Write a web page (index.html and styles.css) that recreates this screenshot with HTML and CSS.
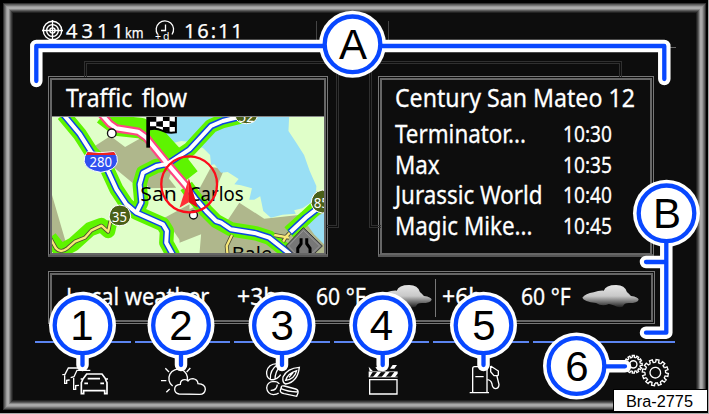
FILE: index.html
```html
<!DOCTYPE html>
<html lang="en">
<head>
    <meta charset="UTF-8">
    <meta name="viewport" content="width=device-width, initial-scale=1.0">
    <title>Infotainment display</title>
    <link rel="stylesheet" href="styles.css">
</head>
<body>

<div class="device">
    <div class="screen">
        <header class="status">
            <svg class="target-icon" viewBox="0 0 20 20">
                <circle cx="10" cy="10" r="8.8"/><circle cx="10" cy="10" r="5.6"/><circle cx="10" cy="10" r="2.5"/>
                <path d="M10 0V20M0 10H20"/>
            </svg>
            <span class="distance">4311</span>
            <span class="unit">km</span>
            <svg class="clock-icon" viewBox="0 0 20 22">
                <path d="M2.6 14.3A8.7 8.7 0 1 1 17 14.5M10.5 4.5V10.5H6"/>
                <text x="0" y="19.5" textLength="14.5">+d</text>
            </svg>
            <span class="time">16:11</span>
            <span class="status-slot"></span>
        </header>

        <main class="panels">
            <section class="panel">
                <h2 class="panel-title"><span class="traffic-title">Traffic flow</span></h2>
                <svg class="map" viewBox="36 138 819 411" preserveAspectRatio="none">
                    <rect x="36" y="138" width="819" height="411" fill="#e0ffc9"/>
                    <!-- built-up areas -->
                    <g fill="#afb78c">
                        <path d="M165 225L212 195L256 228L305 200L400 290L380 345L290 345L205 275Z"/>
                        <path d="M36 372L78 515L58 535L36 505Z"/>
                        <path d="M375 440L450 400V500L424 512Z"/>
                        <path d="M515 288L555 293L510 400L465 380Z"/>
                        <path d="M420 430L480 400L560 455L600 395L675 443L800 430L855 420V549H480L485 490L420 515Z"/>
                        <path d="M300 320L370 300L410 350L330 352Z"/>
                    </g>
                    <!-- water -->
                    <path fill="#99dff5" d="M385 138H750L748 180L770 213L795 252L812 300L832 345L830 385L790 412L765 418L770 428L730 431L695 440L672 420L663 376L645 386H630L638 352L605 343L585 340L598 324L565 303L545 305L525 280L515 282L512 252L490 230L470 228L450 212L425 210L385 220L345 170Z"/>
                    <path fill="#99dff5" d="M855 425V520L825 490L800 455Z"/>
                    <!-- traffic flow -->
                    <g class="flow">
                        <path d="M70 130L120 190L155 245L200 290L230 355L260 400L290 425L370 460L382 480L380 515L402 555"/>
                        <path d="M290 425L305 395L300 340L310 305L350 285L385 278L450 235L515 165L550 150L610 135"/>
                        <path class="flow-wide" d="M190 130L235 164L305 172L345 195L400 255L450 320"/>
                        <path d="M440 345L470 385L500 420L530 450L575 475L650 487L690 500L760 555"/>
                        <path d="M750 485L800 440L858 385"/>
                        <path d="M30 500L62 540L100 520L150 475L185 462L205 480L212 450"/>
                    </g>
                    <g class="minor-case">
                        <path d="M30 500L48 532Q62 548 82 532L105 512L135 500L155 478L185 464L205 482L212 450"/>
                        <path d="M565 555L562 525L578 492M705 492L750 500M732 512L740 498L752 485"/>
                    </g>
                    <g class="minor">
                        <path d="M30 500L48 532Q62 548 82 532L105 512L135 500L155 478L185 464L205 482L212 450"/>
                        <path d="M565 555L562 525L578 492M705 492L750 500M732 512L740 498L752 485"/>
                    </g>
                    <g class="highway-case">
                        <path d="M70 130L120 190L155 245L200 290L230 355L260 400L290 425L370 460L382 480L380 515L402 555"/>
                        <path d="M290 425L305 395L300 340L310 305L350 285L385 278L450 235L515 165L550 150L610 135"/>
                        <path d="M440 345L470 385L500 420L530 450L545 455L575 475L650 487L690 500L760 555"/>
                        <path d="M752 485L800 440L858 395"/>
                        <path class="jam" d="M185 130L210 158L230 172L295 182L320 200L385 280L445 350"/>
                    </g>
                    <g class="highway">
                        <path d="M70 130L120 190L155 245L200 290L230 355L260 400L290 425L370 460L382 480L380 515L402 555"/>
                        <path d="M290 425L305 395L300 340L310 305L350 285L385 278L450 235L515 165L550 150L610 135"/>
                        <path d="M440 345L470 385L500 420L530 450L545 455L575 475L650 487L690 500L760 555"/>
                        <path d="M754 483L800 440L858 395"/>
                        <path d="M185 130L210 158L230 172L295 182L320 200L385 280L445 350"/>
                    </g>
                    <g fill="#fff" stroke="#111" stroke-width="4">
                        <circle cx="216" cy="187" r="13"/>
                        <circle cx="462" cy="432" r="12"/>
                    </g>
                    <!-- destination flag -->
                    <path fill="#fff" d="M330 138H408V184L375 182L355 172L330 176Z"/>
                    <path d="M330 138H350V152H330ZM370 138H390V150H370ZM350 152L370 150V168L350 166ZM390 150L408 152V168L390 168ZM330 166L350 166V174L330 176ZM370 168L390 168V184L370 180Z"/>
                    <path fill="none" stroke="#000" stroke-width="6" d="M409 138V184Q385 188 368 179Q350 170 330 175"/>
                    <path d="M320 138H331V230H320Z"/>
                    <!-- place names -->
                    <text class="place" x="302" y="390" textLength="110" lengthAdjust="spacingAndGlyphs">San</text>
                    <text class="place" x="448" y="390" textLength="165" lengthAdjust="spacingAndGlyphs">Carlos</text>
                    <text class="place" x="577" y="570" textLength="122" lengthAdjust="spacingAndGlyphs">Bale</text>
                    <!-- road shields -->
                    <path fill="#2f50f0" stroke="#fff" stroke-width="3" d="M143 242Q183 248 223 242Q235 256 233 272Q228 298 183 304Q138 298 133 272Q131 256 143 242Z"/>
                    <path fill="#ef2020" d="M143 243Q183 249 223 243L228 252H138Z"/>
                    <text class="shield" x="149" y="288" textLength="68" lengthAdjust="spacingAndGlyphs">280</text>
                    <g fill="#4a5f18" stroke="#fff" stroke-width="3">
                        <path d="M240 402Q272 404 273 438Q268 464 240 464Q212 464 208 438Q210 404 240 402Z"/>
                        <ellipse cx="621" cy="136" rx="33" ry="22"/>
                        <path d="M850 357Q884 362 884 395Q880 426 850 426Q822 422 816 398Q818 362 850 357Z"/>
                    </g>
                    <text class="shield" x="217" y="454" textLength="45" lengthAdjust="spacingAndGlyphs">35</text>
                    <text class="shield" x="597" y="154" textLength="48" lengthAdjust="spacingAndGlyphs">52</text>
                    <text class="shield" x="824" y="411" textLength="46" lengthAdjust="spacingAndGlyphs">85</text>
                    <path fill="#777" stroke="#333" stroke-width="3" d="M793 470L850 525L793 580L740 525Z"/>
                    <path fill="none" stroke="#999" stroke-width="3" d="M793 478L842 525L793 572L748 525Z"/>
                    <path fill="none" stroke="#000" stroke-width="9" d="M786 502V518L776 532V552M803 502V518L813 532V552"/>
                    <!-- car position -->
                    <circle cx="449" cy="340" r="84" fill="none" stroke="#fb0d1b" stroke-width="7"/>
                    <path fill="#ff3038" d="M448 322L420 410L448 394Z"/>
                    <path fill="#e80a18" d="M448 322L475 410L448 394Z"/>
                </svg>
            </section>

            <section class="panel cinema">
                <h2 class="cinema-title">Century San Mateo 12</h2>
                <ul class="movies">
                    <li><span class="movie">Terminator...</span><span class="show">10:30</span></li>
                    <li><span class="movie">Max</span><span class="show">10:35</span></li>
                    <li><span class="movie">Jurassic World</span><span class="show">10:40</span></li>
                    <li><span class="movie">Magic Mike...</span><span class="show">10:45</span></li>
                </ul>
            </section>
        </main>

        <section class="panel weather">
            <span class="weather-label">Local weather</span>
            <span class="hours">+3h</span>
            <span class="temp">60 °F</span>
            <svg class="cloud" viewBox="370 130 170 70">
                <defs>
                    <linearGradient id="cloudFill" x1="0" y1="0" x2="0" y2="1">
                        <stop offset="0" stop-color="#e6e6e6"/>
                        <stop offset=".5" stop-color="#c8c8c8"/>
                        <stop offset="1" stop-color="#222"/>
                    </linearGradient>
                </defs>
                <path fill="url(#cloudFill)" d="M371 170Q380 158 405 154Q420 148 435 149Q440 132 472 132Q498 132 504 153Q512 160 516 165Q538 168 539 176Q536 186 510 186Q495 186 492 196Q480 202 466 193Q455 190 450 189Q430 198 412 186Q375 182 371 170Z"/>
            </svg>
            <span class="divider"></span>
            <span class="hours">+6h</span>
            <span class="temp">60 °F</span>
            <svg class="cloud" viewBox="370 130 170 70">
                <path fill="url(#cloudFill)" d="M371 170Q380 158 405 154Q420 148 435 149Q440 132 472 132Q498 132 504 153Q512 160 516 165Q538 168 539 176Q536 186 510 186Q495 186 492 196Q480 202 466 193Q455 190 450 189Q430 198 412 186Q375 182 371 170Z"/>
            </svg>
        </section>

        <nav class="tabs">
            <div class="tab">
                <svg class="icon" viewBox="178 342 150 96">
                    <path d="M238 354H206L196 373L188 374M195 374V400H201V391L210 390M272 361H232L223 380L213 383M222 384V418H228V407L238 406"/>
                    <path stroke-width="5" d="M243 387H250L261 372H307L318 387H325M250 387L245 398V431H252V422H315V431H322V398L317 387M264 386H301M254 400H265M302 400H313"/>
                </svg>
            </div>
            <div class="tab">
                <svg class="icon" viewBox="477 342 150 96">
                    <path d="M521 408A28 28 0 1 1 565 391M486 392H502M499 355L510 366M574 354L563 366M502 427L512 417"/>
                    <path d="M540 432Q527 430 527 418Q527 404 544 403Q544 389 558 389Q563 389 567 393Q571 386 582 386Q596 388 597 401Q619 402 619 418Q617 433 602 433Z"/>
                </svg>
            </div>
            <div class="tab">
                <svg class="icon" viewBox="81 342 150 96">
                    <path d="M138 341Q112 342 107 365Q105 383 119 389Q138 391 149 374M138 345Q117 360 118 386M144 355Q133 365 132 388"/>
                    <path d="M205 352Q169 354 156 381Q153 398 164 402Q200 396 205 352ZM197 362Q170 370 164 391Q190 389 197 362ZM187 367L174 382"/>
                    <path d="M145 402Q140 394 127 394Q108 396 107 414Q109 432 127 434Q138 433 143 429M139 404Q137 422 119 421"/>
                    <path d="M151 412Q150 406 160 408L194 417Q203 420 201 429L197 439L159 431Q147 428 148 421ZM150 416Q169 425 200 426"/>
                </svg>
            </div>
            <div class="tab">
                <svg class="icon" viewBox="381 342 150 96">
                    <path d="M416 389H498V432H416Z"/>
                    <path class="solid" d="M413 366H425L416 381H413ZM438 366H450L438 381H426ZM464 366H476L464 381H452ZM490 366H500V371L492 381H479ZM413 350L426 364H416ZM433 352L442 350L452 362H441ZM460 348L470 347L462 358H453ZM485 345H498L490 356H477Z"/>
                    <path stroke-width="2" d="M413 381H500M413 365H500"/>
                </svg>
            </div>
            <div class="tab">
                <svg class="icon" viewBox="-12 372 150 96">
                    <path d="M35 457V386Q35 380 41 380H72Q78 380 78 386V457M26 458H84M43 410H68"/>
                    <path d="M89 378L112 393V405L108 409L114 434Q113 446 103 446Q94 444 93 432Q90 420 79 419M89 378V395L99 407H110"/>
                </svg>
            </div>
            <div class="tab tab-settings">
                <svg class="icon gears" viewBox="496 340 142 104">
                    <defs>
                        <path id="tooth" d="M-4.5 -30.7V-39H4.5V-30.7A31 31 0 0 1 11.6 -28.7"/>
                        <g id="gear">
                            <use href="#tooth"/>
                            <use href="#tooth" transform="rotate(30)"/>
                            <use href="#tooth" transform="rotate(60)"/>
                            <use href="#tooth" transform="rotate(90)"/>
                            <use href="#tooth" transform="rotate(120)"/>
                            <use href="#tooth" transform="rotate(150)"/>
                            <use href="#tooth" transform="rotate(180)"/>
                            <use href="#tooth" transform="rotate(210)"/>
                            <use href="#tooth" transform="rotate(240)"/>
                            <use href="#tooth" transform="rotate(270)"/>
                            <use href="#tooth" transform="rotate(300)"/>
                            <use href="#tooth" transform="rotate(330)"/>
                            <circle r="16"/>
                        </g>
                    </defs>
                    <use href="#gear" stroke-width="6" transform="translate(524 374) scale(.68)"/>
                    <use href="#gear" stroke-width="4" transform="translate(590 399) rotate(10)"/>
                </svg>
            </div>
        </nav>
    </div>
</div>

<!-- callouts pointing at the parts of the display -->
<svg class="callouts" viewBox="0 0 709 414">
    <g class="halo">
        <path d="M36.3 81V46H664.3V79"/>
        <path d="M666.3 213V332.7H646M646 262H666"/>
        <path d="M82.5 325V365M181 325V365M282 325V365M382.7 325V365M483.5 325V365M576.5 366.3H625"/>
    </g>
    <g class="bubble-halo">
        <circle cx="352.5" cy="44.3" r="33.5"/><circle cx="666.5" cy="213.3" r="33.5"/>
        <circle cx="82.5" cy="325.3" r="33.5"/><circle cx="181" cy="325.3" r="33.5"/><circle cx="282" cy="325.3" r="33.5"/>
        <circle cx="382.7" cy="325.3" r="33.5"/><circle cx="483.5" cy="325.3" r="33.5"/><circle cx="576.5" cy="366" r="33.5"/>
    </g>
    <g class="line">
        <path d="M36.3 81V46H664.3V79"/>
        <path d="M666.3 213V332.7H646M646 262H666"/>
        <path d="M82.5 325V365M181 325V365M282 325V365M382.7 325V365M483.5 325V365M576.5 366.3H625"/>
    </g>
    <g class="bubble">
        <circle cx="352.5" cy="44.3" r="27.8"/><circle cx="666.5" cy="213.3" r="27.8"/>
        <circle cx="82.5" cy="325.3" r="27.8"/><circle cx="181" cy="325.3" r="27.8"/><circle cx="282" cy="325.3" r="27.8"/>
        <circle cx="382.7" cy="325.3" r="27.8"/><circle cx="483.5" cy="325.3" r="27.8"/><circle cx="576.5" cy="366" r="27.8"/>
    </g>
    <g class="bubble-text">
        <text x="353" y="58.5">A</text>
        <text x="667" y="228">B</text>
        <text x="82" y="340">1</text>
        <text x="181" y="340">2</text>
        <text x="282.3" y="340">3</text>
        <text x="381.5" y="340">4</text>
        <text x="484" y="340">5</text>
        <text x="577" y="380.5">6</text>
    </g>
</svg>
<div class="figure-code">Bra-2775</div>

</body>
</html>
```
FILE: styles.css
```css
* {
    box-sizing: border-box;
}
body {
    margin: 0;
    width: 709px;
    height: 414px;
    overflow: hidden;
    position: relative;
    background-color: #000;
    color: #fff;
    font-family: "Noto Sans", "Open Sans", sans-serif;
}
h2, ul {
    margin: 0;
    padding: 0;
    font-weight: normal;
}
.device {
    width: 709px;
    height: 414px;
    padding: 3px 2px 3px 3px;
    border-right: 1px solid #aaa;
    border-bottom: 1px solid #aaa;
}
.screen {
    height: 407px;
    padding: 15px 30px 0 32px;
    background-color: #0d0d0d;
    box-shadow: inset 0 0 0 1px #303030, inset 0 0 0 2px #5a5a5a, inset 0 0 0 3px #777,
        inset 0 0 0 4px #999, inset 0 0 0 6px #aaa, inset 0 0 0 7px #888,
        inset 0 0 0 8px #5c5c5c, inset 0 0 0 9px #3c3c3c, inset 0 0 0 10px #222;
}
.status {
    display: flex;
    height: 30px;
    margin-bottom: 28px;
    padding-left: 7px;
    white-space: nowrap;
    border-bottom: 1px solid #666;
    -webkit-text-stroke: 0.25px #fff;
}
.status svg {
    fill: none;
    stroke: #fff;
    stroke-width: 1.3;
    flex: none;
}
.target-icon {
    width: 21px;
    height: 21px;
    margin-top: 2px;
}
.distance {
    width: 62px;
    padding-left: 3px;
    font-size: 20px;
    line-height: 25px;
    letter-spacing: 4px;
}
.unit {
    width: 30px;
    font-size: 14px;
    line-height: 30px;
    transform: scaleX(0.9);
    transform-origin: left;
}
.clock-icon {
    width: 20px;
    height: 22px;
    margin-top: 2px;
}
.clock-icon text {
    font-size: 10.5px;
    fill: #fff;
    stroke: none;
}
.time {
    width: 77px;
    padding-left: 9px;
    font-size: 20px;
    line-height: 25px;
    letter-spacing: 1.9px;
}
.status-slot {
    width: 73px;
    height: 20px;
    margin: 3px 0 0 64px;
    border: 1px solid #444;
    border-width: 0 1px;
}
.panels {
    display: flex;
    justify-content: space-between;
    margin: 0 22px 0 13px;
    height: 181px;
}
.panel {
    position: relative;
    background-color: #0d0d0d;
    border: 1px solid #777;
    outline: 2px solid #666;
    outline-offset: -4px;
    -webkit-text-stroke: 0.3px #fff;
}
.panels .panel {
    width: 280px;
    padding: 3px 3px 3px 3px;
    border-bottom: 3px solid #555;
}
.panels .cinema {
    width: 276px;
    padding: 3px 0 0 16px;
}
/* stacked cards behind the front ones */
.panels .panel::before,
.panels .panel::after {
    content: "";
    position: absolute;
    border: 3px double #303030;
}
.panels .panel::before {
    left: 35px;
    right: 0;
    top: -16px;
    height: 13px;
    border-bottom: none;
    border-right: none;
}
.panels .panel::after {
    left: 100%;
    top: -16px;
    width: 9px;
    height: 164px;
    border-left: none;
    border-top: none;
}
.panels .cinema::before {
    left: -10px;
    right: 31px;
    border-left: none;
    border-right: 3px double #303030;
}
.panels .cinema::after {
    left: -10px;
    border-right: none;
    border-left: 3px double #303030;
}
.panel-title {
    height: 37px;
    padding-left: 14px;
    font-size: 25.5px;
    line-height: 34px;
    border-bottom: 1px solid #888;
}
.traffic-title,
.cinema-title,
.movie,
.show {
    display: inline-block;
    white-space: nowrap;
    transform-origin: left;
}
.traffic-title {
    word-spacing: 4px;
    transform: scaleX(0.9);
}
.map {
    display: block;
    width: 272px;
    height: 137px;
    -webkit-text-stroke: 0;
}
.flow, .minor, .minor-case, .highway, .highway-case {
    fill: none;
    stroke-linejoin: round;
}
.flow {
    stroke: #5ef400;
    stroke-width: 43;
}
.flow .flow-wide {
    stroke-width: 62;
}
.minor-case {
    stroke: #4c4c35;
    stroke-width: 12;
}
.minor {
    stroke: #f9e979;
    stroke-width: 7;
}
.highway-case {
    stroke: #0b45e2;
    stroke-width: 21;
}
.highway-case .jam {
    stroke: #ff4583;
    stroke-width: 25;
}
.highway {
    stroke: #fff;
    stroke-width: 12;
}
.place {
    font-size: 62px;
}
.shield {
    font-size: 42px;
    fill: #fff;
}
.cinema-title {
    font-size: 26px;
    line-height: 34px;
    transform: scaleX(0.89);
}
.movies {
    list-style: none;
    padding-top: 3px;
}
.movies li {
    display: flex;
    height: 30.6px;
    line-height: 33px;
}
.movie {
    width: 168px;
    font-size: 26px;
    transform: scaleX(0.86);
}
.show {
    font-size: 22.5px;
    line-height: 34px;
    transform: scaleX(0.85);
}
.weather {
    display: grid;
    grid-template-columns: 171px 79px 68px 51px 7px 79px 61px 1fr;
    height: 53px;
    margin: 14px 21px 0 13px;
    padding-left: 17px;
    font-size: 23px;
    line-height: 48px;
    white-space: nowrap;
}
.weather span {
    transform-origin: left;
}
.weather-label {
    transform: scaleX(0.95);
}
.temp {
    transform: scaleX(0.92);
}
.cloud {
    width: 57px;
    height: 24px;
    margin-top: 12px;
}
.weather .cloud:nth-of-type(1) {
    margin-left: -9px;
}
.divider {
    width: 1px;
    height: 38px;
    margin-top: 7px;
    background-color: #777;
}
.tabs {
    display: flex;
    gap: 4px;
    margin-top: 17px;
}
.tab {
    width: 95.6px;
    height: 60px;
    padding: 21px 0 0 2px;
    border-top: 2px solid #5b84f0;
    text-align: center;
}
.tab-settings {
    width: 142px;
    padding: 10px 4px 0 0;
    text-align: right;
}
.icon {
    width: 50px;
    height: 32px;
    overflow: visible;
    fill: none;
    stroke: #fff;
    stroke-width: 4;
}
.icon .solid {
    fill: #fff;
    stroke: none;
}
.gears {
    width: 47.3px;
    height: 34.7px;
}
.callouts {
    position: absolute;
    left: 0;
    top: 0;
    width: 709px;
    height: 414px;
}
.halo, .line {
    fill: none;
    stroke-linejoin: round;
    stroke-linecap: round;
}
.halo {
    stroke: #fff;
    stroke-width: 12.5;
}
.line {
    stroke: #0847ff;
    stroke-width: 4.3;
}
.bubble-halo {
    fill: #fff;
}
.bubble {
    fill: #fff;
    stroke: #0847ff;
    stroke-width: 4.3;
}
.bubble-text {
    font-family: "Liberation Sans", Arial, sans-serif;
    font-size: 42px;
    text-anchor: middle;
}
.figure-code {
    position: absolute;
    left: 613px;
    top: 389px;
    width: 95px;
    height: 23px;
    padding-right: 2px;
    background-color: #fff;
    border: 1px solid #000;
    color: #000;
    font: 16.3px/22px "Liberation Sans", Arial, sans-serif;
    text-align: center;
}
```
